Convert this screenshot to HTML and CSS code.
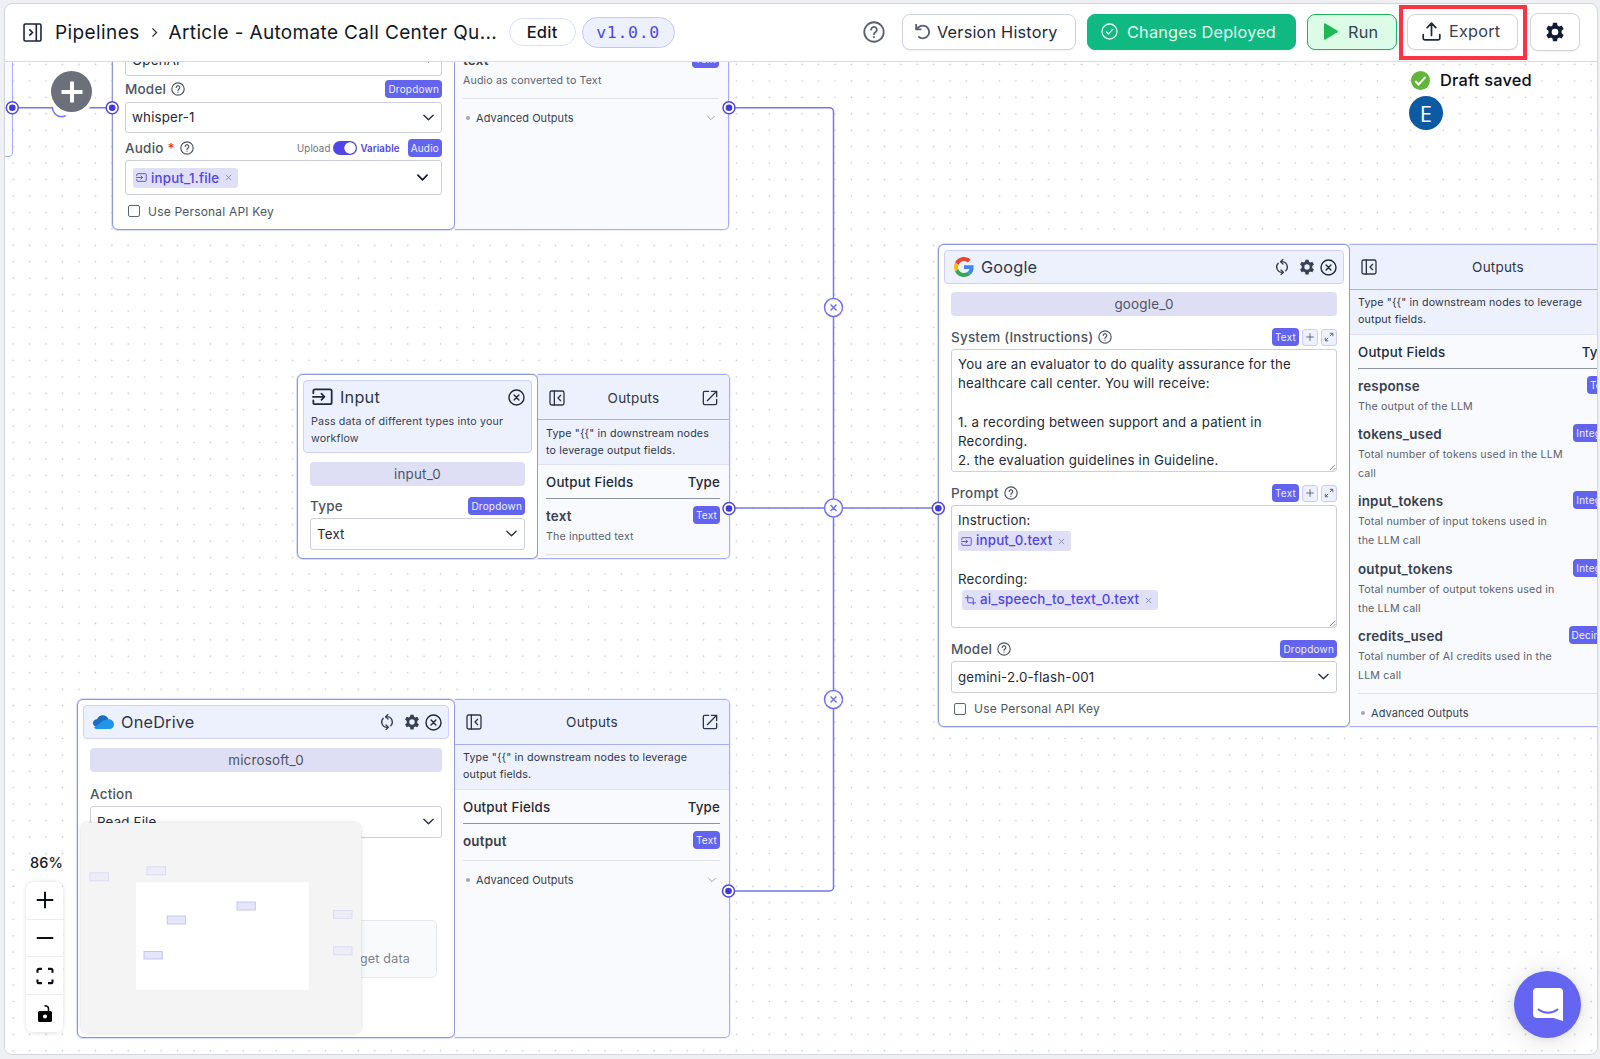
FILE: index.html
```html
<!DOCTYPE html>
<html lang="en">
<head>
    <meta charset="UTF-8">
    <meta name="viewport" content="width=device-width, initial-scale=1.0">
    <title>Pipelines - Automate Call Center</title>
    <link rel="stylesheet" href="styles.css">
</head>
<body>
    <!-- Shared icons -->
    <svg class="sprite" width="0" height="0">
        <symbol id="i-help" viewBox="0 0 24 24"><circle cx="12" cy="12" r="10.6"/><path d="M8.9 9.4a3.1 3.1 0 1 1 4.6 2.8c-1 .6-1.5 1.1-1.5 2.3"/><path d="M12 17.3v.3"/></symbol>
        <symbol id="i-close" viewBox="0 0 24 24"><circle cx="12" cy="12" r="10.6"/><path d="M8.6 8.6l6.8 6.8M15.4 8.6l-6.8 6.8"/></symbol>
        <symbol id="i-chevron" viewBox="0 0 24 24"><path d="M2 7l10 10L22 7"/></symbol>
        <symbol id="i-gear" viewBox="0 0 24 24"><path fill-rule="evenodd" d="M9.6 1h4.8l.6 3.2 1.9 1.1 3.1-1.1 2.4 4.1-2.5 2.1v3.2l2.5 2.1-2.4 4.1-3.1-1.1-1.9 1.1-.6 3.3H9.6l-.6-3.3-1.9-1.1L4 19.800 1.600 15.700l2.500-2.100v-3.200L1.600 8.300 4 4.200l3.100 1.100L9 4.200zM12 8a4 4 0 1 0 0 8 4 4 0 0 0 0-8z"/></symbol>
        <symbol id="i-sync" viewBox="0 0 24 24"><path d="M10.500 4H12a8 8 0 0 1 5.700 13.600M13.500 20H12A8 8 0 0 1 6.300 6.400"/><path d="M13.500.5L10 4l3.500 3.500M10.500 16.500L14 20l-3.500 3.500"/></symbol>
        <symbol id="i-input" viewBox="0 0 24 20"><path d="M1.500 6V3.500a2 2 0 0 1 2-2h17a2 2 0 0 1 2 2v13a2 2 0 0 1-2 2h-17a2 2 0 0 1-2-2V14M1 10h13M10.800 6.500l3.500 3.500-3.500 3.500"/></symbol>
        <symbol id="i-panel" viewBox="0 0 24 24"><rect x="1.500" y="1.500" width="21" height="21" rx="2.500"/><path d="M8 1.500v21M17.500 8l-4 4 4 4"/></symbol>
        <symbol id="i-open" viewBox="0 0 24 24"><path d="M10 2H4a2 2 0 0 0-2 2v16a2 2 0 0 0 2 2h16a2 2 0 0 0 2-2v-6M14 2h8v8M22 2L8 16"/></symbol>
        <symbol id="i-expand" viewBox="0 0 24 24"><path d="M14 3h7v7M21 3l-7 7M10 21H3v-7M3 21l7-7"/></symbol>
        <symbol id="i-plus" viewBox="0 0 24 24"><path d="M12 3v18M3 12h18"/></symbol>
        <symbol id="i-x" viewBox="0 0 24 24"><path d="M4 4l16 16M20 4L4 20"/></symbol>
        <symbol id="i-speech" viewBox="0 0 24 24"><path d="M1 6h14a3 3 0 0 1 3 3v12M6 1v13a3 3 0 0 0 3 3h14"/></symbol>
        <symbol id="i-grip" viewBox="0 0 8 8"><path d="M1 7l6-6M4.500 7.500l3-3"/></symbol>
    </svg>

    <div class="app">
        <header class="topbar">
            <svg class="sidebar-icon" viewBox="0 0 24 24"><rect x="1.300" y="1.300" width="21.400" height="21.400" rx="1.500"/><path d="M16.800 1.300v21.400M8 8l4 4-4 4"/></svg>
            <span class="crumb">Pipelines</span>
            <svg class="crumb-sep" viewBox="0 0 10 16"><path d="M2 2l6 6-6 6"/></svg>
            <span class="crumb title">Article - Automate Call Center Qu...</span>
            <button class="pill">Edit</button>
            <span class="version">v1.0.0</span>

            <div class="actions">
                <svg class="icon help-icon"><use href="#i-help"/></svg>
                <button class="btn history">
                    <svg class="icon" viewBox="0 0 24 24"><path d="M3 1.500V9h7.500M4 8.500c2-3 5-4.700 8.500-4.700a8.900 8.900 0 1 1-6.500 15"/></svg>
                    <span>Version History</span>
                </button>
                <button class="btn deployed">
                    <svg class="icon" viewBox="0 0 24 24"><circle cx="12" cy="12" r="10.600"/><path d="M7.500 12.500l3 3 6-6.500"/></svg>
                    <span>Changes Deployed</span>
                </button>
                <button class="btn run">
                    <svg viewBox="0 0 14 17"><path d="M0 1.200C0 .3.800 0 1.500.400l11.700 7.200c.8.500.8 1.300 0 1.800L1.500 16.600C.8 17 0 16.700 0 15.800z"/></svg>
                    <span>Run</span>
                </button>
                <div class="export-highlight">
                    <button class="btn export">
                        <svg class="icon" viewBox="0 0 24 24"><path d="M1.500 16v4.500a2 2 0 0 0 2 2h17a2 2 0 0 0 2-2V16M12 17V1.800M6.500 7L12 1.500 17.500 7"/></svg>
                        <span>Export</span>
                    </button>
                </div>
                <button class="btn settings"><svg class="solid"><use href="#i-gear"/></svg></button>
            </div>
        </header>

        <main class="canvas">
            <div class="viewport">
                <svg class="edges" width="1600" height="1059">
                    <path d="M12 107.700H112"/>
                    <path d="M729 107.700H829.500a4 4 0 0 1 4 4V508"/>
                    <path d="M729 508H938"/>
                    <path d="M729 891H829.500a4 4 0 0 0 4-4V508"/>
                </svg>

                <div class="node-stub"></div>

                <section class="node node-speech">
                    <div class="node-body">
                        <div class="select"><span>OpenAI</span><svg class="icon"><use href="#i-chevron"/></svg></div>
                        <div class="label-row">
                            <label>Model</label><svg class="icon q"><use href="#i-help"/></svg>
                            <span class="badge">Dropdown</span>
                        </div>
                        <div class="select"><span>whisper-1</span><svg class="icon"><use href="#i-chevron"/></svg></div>
                        <div class="label-row audio-row">
                            <label>Audio <em>*</em></label><svg class="icon q"><use href="#i-help"/></svg>
                            <div class="switch"><span>Upload</span><i></i><b>Variable</b></div>
                            <span class="badge">Audio</span>
                        </div>
                        <div class="select select-chip">
                            <span class="chip"><svg class="icon"><use href="#i-input"/></svg>input_1.file<svg class="icon x"><use href="#i-x"/></svg></span>
                            <svg class="icon"><use href="#i-chevron"/></svg>
                        </div>
                        <div class="check"><i></i><span>Use Personal API Key</span></div>
                    </div>
                    <div class="outputs">
                        <div class="out-head"></div>
                        <p class="out-tip"></p>
                        <div class="out-list">
                            <div class="out-cols"></div>
                            <div class="out-field"><div><h4>text</h4><p>Audio as converted to Text</p></div><span class="badge">Text</span></div>
                            <div class="advanced"><i></i><span>Advanced Outputs</span><svg class="icon"><use href="#i-chevron"/></svg></div>
                        </div>
                    </div>
                </section>

                <section class="node node-input">
                    <div class="node-body">
                        <div class="node-head">
                            <div class="node-title">
                                <svg class="icon title-input"><use href="#i-input"/></svg>
                                <h3>Input</h3>
                                <svg class="icon close"><use href="#i-close"/></svg>
                            </div>
                            <p>Pass data of different types into your workflow</p>
                        </div>
                        <div class="node-id">input_0</div>
                        <div class="label-row"><label>Type</label><span class="badge">Dropdown</span></div>
                        <div class="select"><span>Text</span><svg class="icon"><use href="#i-chevron"/></svg></div>
                    </div>
                    <div class="outputs">
                        <div class="out-head"><svg class="icon"><use href="#i-panel"/></svg><span>Outputs</span><svg class="icon"><use href="#i-open"/></svg></div>
                        <p class="out-tip">Type "{{" in downstream nodes to leverage output fields.</p>
                        <div class="out-list">
                            <div class="out-cols"><span>Output Fields</span><span>Type</span></div>
                            <div class="out-field"><div><h4>text</h4><p>The inputted text</p></div><span class="badge">Text</span></div>
                            <div class="advanced"></div>
                        </div>
                    </div>
                </section>

                <section class="node node-google">
                    <div class="node-body">
                        <div class="node-head">
                            <div class="node-title">
                                <svg class="logo-google" viewBox="0 0 48 48">
                                    <path fill="#EA4335" d="M24 9.500c3.540 0 6.710 1.220 9.210 3.600l6.850-6.850C35.900 2.380 30.470 0 24 0 14.620 0 6.510 5.380 2.560 13.220l7.980 6.190C12.430 13.720 17.740 9.500 24 9.500z"/>
                                    <path fill="#4285F4" d="M46.980 24.550c0-1.570-.15-3.090-.38-4.550H24v9.020h12.940c-.58 2.960-2.260 5.480-4.780 7.180l7.730 6c4.510-4.180 7.090-10.360 7.090-17.650z"/>
                                    <path fill="#FBBC05" d="M10.530 28.590c-.48-1.450-.76-2.990-.76-4.590s.27-3.140.76-4.590l-7.980-6.190C.92 16.460 0 20.120 0 24c0 3.880.92 7.540 2.560 10.780l7.970-6.190z"/>
                                    <path fill="#34A853" d="M24 48c6.480 0 11.930-2.130 15.890-5.810l-7.730-6c-2.150 1.450-4.920 2.300-8.160 2.300-6.260 0-11.570-4.220-13.470-9.910l-7.980 6.190C6.510 42.620 14.620 48 24 48z"/>
                                </svg>
                                <h3>Google</h3>
                                <svg class="icon sync"><use href="#i-sync"/></svg>
                                <svg class="solid gear"><use href="#i-gear"/></svg>
                                <svg class="icon close"><use href="#i-close"/></svg>
                            </div>
                        </div>
                        <div class="node-id">google_0</div>
                        <div class="label-row">
                            <label>System (Instructions)</label><svg class="icon q"><use href="#i-help"/></svg>
                            <span class="badge">Text</span>
                            <span class="mini"><svg class="icon"><use href="#i-plus"/></svg></span>
                            <span class="mini"><svg class="icon"><use href="#i-expand"/></svg></span>
                        </div>
                        <div class="textbox">You are an evaluator to do quality assurance for the<br>healthcare call center. You will receive:<br><br>1. a recording between support and a patient in<br>Recording.<br>2. the evaluation guidelines in Guideline.<svg class="grip"><use href="#i-grip"/></svg></div>
                        <div class="label-row">
                            <label>Prompt</label><svg class="icon q"><use href="#i-help"/></svg>
                            <span class="badge">Text</span>
                            <span class="mini"><svg class="icon"><use href="#i-plus"/></svg></span>
                            <span class="mini"><svg class="icon"><use href="#i-expand"/></svg></span>
                        </div>
                        <div class="textbox prompt">
                            <div class="line">Instruction:</div>
                            <span class="chip"><svg class="icon"><use href="#i-input"/></svg>input_0.text<svg class="icon x"><use href="#i-x"/></svg></span>
                            <div class="line gap">Recording:</div>
                            <span class="chip indent"><svg class="icon speech"><use href="#i-speech"/></svg>ai_speech_to_text_0.text<svg class="icon x"><use href="#i-x"/></svg></span>
                            <svg class="grip"><use href="#i-grip"/></svg>
                        </div>
                        <div class="label-row">
                            <label>Model</label><svg class="icon q"><use href="#i-help"/></svg>
                            <span class="badge">Dropdown</span>
                        </div>
                        <div class="select"><span>gemini-2.0-flash-001</span><svg class="icon"><use href="#i-chevron"/></svg></div>
                        <div class="check"><i></i><span>Use Personal API Key</span></div>
                    </div>
                    <div class="outputs">
                        <div class="out-head"><svg class="icon"><use href="#i-panel"/></svg><span>Outputs</span></div>
                        <p class="out-tip">Type "{{" in downstream nodes to leverage output fields.</p>
                        <div class="out-list">
                            <div class="out-cols"><span>Output Fields</span><span>Type</span></div>
                            <div class="out-field"><div><h4>response</h4><p>The output of the LLM</p></div><span class="badge">Text</span></div>
                            <div class="out-field"><div><h4>tokens_used</h4><p>Total number of tokens used in the LLM<br>call</p></div><span class="badge">Integer</span></div>
                            <div class="out-field"><div><h4>input_tokens</h4><p>Total number of input tokens used in<br>the LLM call</p></div><span class="badge">Integer</span></div>
                            <div class="out-field"><div><h4>output_tokens</h4><p>Total number of output tokens used in<br>the LLM call</p></div><span class="badge">Integer</span></div>
                            <div class="out-field"><div><h4>credits_used</h4><p>Total number of AI credits used in the<br>LLM call</p></div><span class="badge">Decimal</span></div>
                            <div class="advanced"><i></i><span>Advanced Outputs</span></div>
                        </div>
                    </div>
                </section>

                <section class="node node-onedrive">
                    <div class="node-body">
                        <div class="node-head">
                            <div class="node-title">
                                <svg class="logo-onedrive" viewBox="0 0 44 28">
                                    <path fill="#1a6fc4" d="M8 24C2 22 0 15 4 11c2-2 4-2.500 6-2.500C13 1 22-2 29 3c2 1.500 3.500 4 4 6 6 0 9 4 9 9z"/>
                                    <path fill="#2196e8" d="M4 25l20-14c3-2 6-2.500 9-2 7 0 11 4 11 10 0 5-4 9-9 9H11c-3 0-5.500-1-7-3z"/>
                                </svg>
                                <h3>OneDrive</h3>
                                <svg class="icon sync"><use href="#i-sync"/></svg>
                                <svg class="solid gear"><use href="#i-gear"/></svg>
                                <svg class="icon close"><use href="#i-close"/></svg>
                            </div>
                        </div>
                        <div class="node-id">microsoft_0</div>
                        <div class="label-row"><label>Action</label></div>
                        <div class="select"><span>Read File</span><svg class="icon"><use href="#i-chevron"/></svg></div>
                        <div class="hint-box">get data</div>
                    </div>
                    <div class="outputs">
                        <div class="out-head"><svg class="icon"><use href="#i-panel"/></svg><span>Outputs</span><svg class="icon"><use href="#i-open"/></svg></div>
                        <p class="out-tip">Type "{{" in downstream nodes to leverage output fields.</p>
                        <div class="out-list">
                            <div class="out-cols"><span>Output Fields</span><span>Type</span></div>
                            <div class="out-field"><div><h4>output</h4></div><span class="badge">Text</span></div>
                            <div class="advanced"><i></i><span>Advanced Outputs</span><svg class="icon"><use href="#i-chevron"/></svg></div>
                        </div>
                    </div>
                </section>

                <!-- Handles and edge buttons sit over the nodes -->
                <svg class="edges over" width="1600" height="1059">
                    <g class="cut">
                        <g transform="translate(61.500 107.700)"><circle r="9"/></g>
                        <g transform="translate(833.500 307.500)"><circle r="9"/><path d="M-3-3l6 6M3-3l-6 6"/></g>
                        <g transform="translate(833.500 508)"><circle r="9"/><path d="M-3-3l6 6M3-3l-6 6"/></g>
                        <g transform="translate(833.500 699.500)"><circle r="9"/><path d="M-3-3l6 6M3-3l-6 6"/></g>
                    </g>
                    <g class="handle">
                        <g transform="translate(12.300 107.700)"><circle r="6"/><circle class="dot" r="3.300"/></g>
                        <g transform="translate(112.200 107.700)"><circle r="6"/><circle class="dot" r="3.300"/></g>
                        <g transform="translate(729 107.700)"><circle r="6"/><circle class="dot" r="3.300"/></g>
                        <g transform="translate(729 508.500)"><circle r="6"/><circle class="dot" r="3.300"/></g>
                        <g transform="translate(938.300 508.300)"><circle r="6"/><circle class="dot" r="3.300"/></g>
                        <g transform="translate(728.500 891)"><circle r="6"/><circle class="dot" r="3.300"/></g>
                    </g>
                </svg>
            </div>

            <button class="add-node"><svg class="icon"><use href="#i-plus"/></svg></button>

            <div class="status">
                <div class="saved">
                    <svg viewBox="0 0 20 20"><circle cx="10" cy="10" r="10"/><path d="M4.500 10.500l3.500 3.700 7.300-8"/></svg>
                    <span>Draft saved</span>
                </div>
                <div class="avatar">E</div>
            </div>

            <svg class="minimap" viewBox="0 0 280 210">
                <rect class="mask" width="280" height="210" rx="7"/>
                <rect class="view" x="55" y="59.300" width="172.500" height="107.500"/>
                <g class="outside">
                    <rect x="9" y="49.800" width="18.500" height="8"/>
                    <rect x="66" y="43.800" width="18.500" height="8"/>
                    <rect x="252.500" y="87.500" width="18.500" height="8"/>
                    <rect x="252.500" y="123.800" width="18.500" height="8"/>
                </g>
                <rect x="156" y="79" width="18.300" height="8"/>
                <rect x="86.300" y="93" width="18.300" height="8"/>
                <rect x="63" y="128.500" width="18.300" height="7.500"/>
            </svg>

            <div class="zoom">
                <span class="zoom-value">86%</span>
                <div class="zoom-controls">
                    <button><svg class="icon"><use href="#i-plus"/></svg></button>
                    <button><svg class="icon" viewBox="0 0 24 24"><path d="M3 12h18"/></svg></button>
                    <button><svg class="icon fit" viewBox="0 0 24 24"><path d="M2 7.500V4.500a2 2 0 0 1 2-2h4M16 2.500h4a2 2 0 0 1 2 2v3M22 16.500v3a2 2 0 0 1-2 2h-4M8 21.500H4a2 2 0 0 1-2-2v-3"/></svg></button>
                    <button><svg class="lock" viewBox="0 0 14 17"><path fill-rule="evenodd" d="M1.500 6h11A1.500 1.500 0 0 1 14 7.500v8a1.500 1.500 0 0 1-1.500 1.500h-11A1.500 1.500 0 0 1 0 15.500v-8A1.500 1.500 0 0 1 1.500 6zM7 9.500a2 2 0 1 0 0 4 2 2 0 0 0 0-4z"/><path class="shackle" d="M10.500 6V3.500c0-1.700-1.300-2.700-4-2.700"/></svg></button>
                </div>
            </div>

            <button class="chat">
                <svg viewBox="0 0 30 33"><path class="bubble" d="M4 0h22a4 4 0 0 1 4 4v29l-9.500-3H4a4 4 0 0 1-4-4V4a4 4 0 0 1 4-4z"/><path class="smile" d="M5.500 21.500c5.500 4.300 13.500 4.300 19 0"/></svg>
            </button>
        </main>
    </div>
</body>
</html>
```
FILE: styles.css
```css
* {
    box-sizing: border-box;
}
body {
    margin: 0;
    padding: 3px 2px 4px 4px;
    height: 1059px;
    overflow: hidden;
    background: #eff0f3;
    font-family: Inter, "Liberation Sans", sans-serif;
    color: #111827;
    letter-spacing: 0.2px;
}
h3, h4, p {
    margin: 0;
    font-weight: 400;
}
button {
    font: inherit;
    letter-spacing: inherit;
    color: inherit;
    padding: 0;
    background: #fff;
}
.sprite {
    position: absolute;
}
.icon {
    fill: none;
    stroke: currentColor;
    stroke-width: 2;
    stroke-linecap: round;
    stroke-linejoin: round;
    flex: none;
}
.solid {
    fill: currentColor;
    flex: none;
}
.app {
    display: flex;
    flex-direction: column;
    height: 1052px;
    border: 1px solid #d3d6dd;
    border-radius: 8px;
    overflow: hidden;
    background: #fff;
}

/* Top bar */
.topbar {
    display: flex;
    align-items: center;
    height: 58px;
    flex: none;
    padding: 0 17px 1px 18px;
    border-bottom: 1px solid #d8dae0;
}
.sidebar-icon {
    width: 19px;
    height: 19px;
    margin-right: 13px;
    fill: none;
    stroke: #1b2338;
    stroke-width: 2;
}
.crumb {
    font-size: 19px;
    white-space: nowrap;
    letter-spacing: 0.4px;
}
.crumb-sep {
    width: 7px;
    height: 11px;
    margin: 0 11px 0 11px;
    fill: none;
    stroke: #1f2937;
    stroke-width: 1.8;
}
.title {
    width: 331px;
    letter-spacing: 0.35px;
}
.pill {
    width: 67px;
    height: 28px;
    margin-left: 9px;
    border: 1px solid #dcdffc;
    border-radius: 14px;
    font-size: 16.5px;
    font-weight: 500;
}
.version {
    display: flex;
    align-items: center;
    justify-content: center;
    width: 93px;
    height: 31px;
    margin-left: 6px;
    border: 1px solid #c3c8f8;
    border-radius: 16px;
    background: #edf1fe;
    color: #4f46e5;
    font-family: "DejaVu Sans Mono", monospace;
    font-size: 16.5px;
    letter-spacing: 0.7px;
}
.actions {
    display: flex;
    align-items: center;
    margin-left: auto;
}
.help-icon {
    width: 22px;
    height: 22px;
    margin-right: 17px;
    color: #5b6270;
}
.btn {
    display: flex;
    align-items: center;
    height: 36px;
    padding-bottom: 1px;
    border: 1px solid #d0d3da;
    border-radius: 8px;
    font-size: 16.3px;
    white-space: nowrap;
    box-shadow: 0 1px 2px rgba(0, 0, 0, 0.06);
}
.history {
    width: 174px;
    padding-left: 11px;
    gap: 6px;
    color: #1f2937;
}
.history .icon {
    width: 17px;
    height: 17px;
    color: #5b6270;
    stroke-width: 2.6;
    stroke-linecap: butt;
}
.deployed {
    width: 209px;
    margin-left: 11px;
    padding-left: 13px;
    gap: 9px;
    border-color: #10b981;
    background: #10b981;
    color: #e2fbee;
}
.deployed .icon {
    width: 17px;
    height: 17px;
    stroke-width: 1.8;
}
.run {
    width: 90px;
    margin-left: 11px;
    padding-left: 16px;
    gap: 10px;
    border-color: #1fb45c;
    background: #dcfce7;
    color: #374151;
}
.run svg {
    width: 14px;
    height: 17px;
    fill: #1db954;
}
.export-highlight {
    width: 128px;
    height: 55px;
    margin: 0 3px 0 2px;
    border: 4px solid #fb3343;
    padding: 5px 4px;
}
.export {
    width: 111px;
    padding-left: 14px;
    gap: 8px;
    color: #374151;
}
.export .icon {
    width: 19px;
    height: 19px;
    color: #1f2937;
    stroke-width: 2.2;
}
.settings {
    width: 50px;
    height: 38px;
    padding-bottom: 0;
    justify-content: center;
    color: #111c33;
}
.settings svg {
    width: 20px;
    height: 20px;
}

/* Canvas */
.canvas {
    position: relative;
    flex: 1;
    overflow: hidden;
    background-color: #fff;
    background-image: radial-gradient(circle at 8.2px 8.2px, #c9ccd6 0.7px, transparent 1.1px);
    background-size: 16.45px 16.45px;
    background-position: 0 -5.7px;
}
.viewport {
    position: absolute;
    left: -5px;
    top: -62px;
    width: 1600px;
    height: 1059px;
}
.edges {
    position: absolute;
    left: 0;
    top: 0;
    fill: none;
    stroke: #7376f2;
    stroke-width: 1.5;
}
.over {
    pointer-events: none;
}
.cut circle {
    fill: #fff;
}
.handle {
    fill: #fff;
    stroke: #4f46e5;
}
.handle .dot {
    fill: #4338e0;
    stroke: none;
}
.node {
    position: absolute;
    display: flex;
}
.node-stub {
    position: absolute;
    left: -40px;
    top: 20px;
    width: 53px;
    height: 137px;
    border: 1px solid #a9adf8;
    border-radius: 4px;
    background: #f9fafd;
}
.node-speech {
    left: 112px;
    top: -82px;
    height: 312px;
}
.node-input {
    left: 297px;
    top: 374px;
    height: 185px;
}
.node-google {
    left: 938px;
    top: 244px;
    height: 483px;
}
.node-onedrive {
    left: 77px;
    top: 699px;
    height: 339px;
}
.node-body {
    display: flex;
    flex-direction: column;
    padding: 5px 12px 0;
    border: 1px solid #8d97da;
    border-radius: 6px;
    background: #fff;
    box-shadow: 0 0 0 1px rgba(150, 160, 250, 0.35);
}
.node-speech .node-body {
    width: 343px;
    justify-content: flex-end;
    padding-bottom: 11px;
}
.node-input .node-body {
    width: 241px;
}
.node-google .node-body {
    width: 412px;
}
.node-onedrive .node-body {
    width: 378px;
}
.node-head {
    margin: 0 -7px;
    padding: 0 7px;
    min-height: 34px;
    border: 1px solid #cdd1fa;
    border-radius: 4px;
    background: #edf1fe;
}
.node-input .node-head {
    height: 73px;
}
.node-title {
    display: flex;
    align-items: center;
    height: 32px;
    color: #374151;
}
.node-title h3 {
    flex: 1;
    margin-left: 7px;
    font-size: 16.3px;
    color: #2d3648;
}
.node-head p {
    margin-top: 1px;
    font-size: 10.7px;
    line-height: 16.5px;
    letter-spacing: 0.15px;
    color: #374151;
}
.title-input {
    width: 21px;
    height: 17.5px;
    margin-left: 1px;
    color: #1f2937;
}
.close {
    width: 17px;
    height: 17px;
    margin-right: -1px;
    color: #1f2937;
}
.sync {
    width: 16px;
    height: 16px;
    margin-right: 9px;
}
.gear {
    width: 16px;
    height: 16px;
    margin-right: 5px;
}
.logo-google {
    width: 20px;
    height: 20px;
    margin-left: 2px;
}
.logo-onedrive {
    width: 22px;
    height: 14px;
    margin-left: 1px;
}
.node-id {
    height: 24px;
    margin-top: 8px;
    flex: none;
    border-radius: 4px;
    background: #dedef5;
    font-size: 13.4px;
    line-height: 24px;
    text-align: center;
    color: #4b5563;
}
.node-input .node-id,
.node-onedrive .node-id {
    margin-top: 9px;
}
.label-row {
    display: flex;
    align-items: center;
    height: 18px;
    margin: 12px 0 3px;
    flex: none;
    font-size: 13.5px;
    color: #4b5563;
}
.node-input .label-row {
    margin-top: 11px;
}
.node-onedrive .label-row {
    margin-top: 13px;
}
.label-row label {
    font-weight: 500;
    white-space: nowrap;
    margin-right: auto;
}
.label-row label:has(+ .q) {
    margin-right: 5px;
}
.label-row em {
    color: #ef2b2b;
    font-style: normal;
}
.q {
    width: 14px;
    height: 14px;
    margin-right: auto;
}
.badge {
    flex: none;
    height: 18px;
    padding: 0 3px;
    border-radius: 4px;
    background: #6264f0;
    color: #eef0ff;
    font-size: 10px;
    line-height: 18px;
}
.mini {
    display: flex;
    align-items: center;
    justify-content: center;
    width: 16px;
    height: 17px;
    margin-left: 3px;
    border: 1px solid #c9cdf9;
    border-radius: 3px;
    background: #edf1fe;
    color: #4b5563;
}
.mini .icon {
    width: 10px;
    height: 10px;
    stroke-linecap: butt;
    stroke-linejoin: miter;
}
.select {
    display: flex;
    align-items: center;
    justify-content: space-between;
    flex: none;
    height: 31.5px;
    padding: 0 7px 0 6px;
    border: 1px solid #cdd0d7;
    border-radius: 3px;
    background: #fff;
    font-size: 13.3px;
    color: #1f2937;
}
.select > .icon {
    width: 11px;
    height: 11px;
    stroke-width: 2.8;
}
.node-speech .label-row {
    margin-top: 4px;
    margin-bottom: 4px;
}
.node-speech .audio-row {
    margin-top: 6px;
    margin-bottom: 3px;
}
.node-speech .select-chip {
    height: 35px;
    padding: 0 13px 0 7px;
}
.select-chip > .icon {
    color: #111827;
    stroke-width: 3.6;
}
.switch {
    display: flex;
    align-items: center;
    gap: 3px;
    margin-right: 8px;
    font-size: 9.7px;
    letter-spacing: 0.1px;
    color: #6b7280;
}
.switch i {
    width: 24px;
    height: 14px;
    border-radius: 7px;
    background: radial-gradient(circle at 17px 7px, #fff 5.3px, #4f46e5 6px);
}
.switch b {
    font-weight: 600;
    color: #4f46e5;
}
.chip {
    display: inline-flex;
    align-items: center;
    height: 20px;
    padding: 0 6px 0 3px;
    border-radius: 3px;
    background: #dfdff7;
    color: #4f46e5;
    font-size: 13.3px;
    font-weight: 500;
    white-space: nowrap;
}
.chip .icon {
    width: 11px;
    height: 9px;
    margin-right: 4px;
}
.chip .speech {
    width: 11px;
    height: 11px;
}
.chip .x {
    width: 7px;
    height: 7px;
    margin: 0 0 0 6px;
    color: #858aa0;
    stroke-width: 3;
}
.textbox {
    position: relative;
    height: 123px;
    flex: none;
    padding: 5px 5px 0 6px;
    border: 1px solid #cdd0d7;
    border-radius: 3px;
    font-size: 13.25px;
    line-height: 19.3px;
    color: #1f2937;
    white-space: nowrap;
}
.prompt .line {
    height: 20px;
}
.prompt .gap {
    margin-top: 19px;
}
.prompt .chip {
    display: flex;
    width: max-content;
}
.prompt .indent {
    margin-left: 4px;
}
.grip {
    position: absolute;
    right: 0;
    bottom: 0;
    width: 7px;
    height: 7px;
    stroke: #6b7280;
    stroke-width: 0.9;
}
.check {
    display: flex;
    align-items: center;
    height: 14px;
    margin-top: 9px;
    padding-left: 3px;
    flex: none;
    gap: 8px;
    font-size: 12px;
    color: #4b5563;
}
.check i {
    width: 12px;
    height: 12px;
    border: 1px solid #5f6673;
    border-radius: 2px;
}
.hint-box {
    height: 58px;
    flex: none;
    margin: 82px 5px 0 6px;
    padding: 30px 26px 0 0;
    border: 1px solid #e7e9ef;
    border-radius: 5px;
    background: #f9fafc;
    font-size: 12.5px;
    text-align: right;
    color: #7b8190;
}

/* Outputs panel */
.outputs {
    width: 274px;
    border: 1px solid #a9adf8;
    border-left: 0;
    border-radius: 0 5px 5px 0;
    background: #f9fafd;
    box-shadow: 0 0 0 1px rgba(165, 170, 250, 0.2);
    overflow: hidden;
}
.node-input .outputs {
    width: 192px;
}
.node-onedrive .outputs {
    width: 275px;
}
.out-head {
    display: flex;
    align-items: center;
    height: 45px;
    padding: 0 11px;
    border-bottom: 1px solid #aaaef8;
    background: #edf1fe;
    color: #2d3648;
    font-size: 13.5px;
}
.out-head span {
    flex: 1;
    text-align: center;
}
.node-google .out-head span {
    margin-left: 7px;
}
.out-head .icon {
    width: 16px;
    height: 16px;
}
.out-tip {
    height: 45px;
    padding: 5px 8px 0;
    border-bottom: 1px solid #dfe2fa;
    background: #edf1fe;
    font-size: 10.7px;
    line-height: 16.5px;
    letter-spacing: 0.15px;
    color: #2d3648;
}
.node-input .out-head {
    padding-top: 1px;
}
.node-input .out-tip {
    padding-top: 6px;
}
.out-list {
    padding: 0 9px 0 8px;
}
.out-cols {
    display: flex;
    justify-content: space-between;
    align-items: center;
    height: 33.5px;
    padding-top: 1px;
    border-bottom: 1px solid #8d94a0;
    margin-bottom: 7px;
    font-size: 13.3px;
    font-weight: 500;
    color: #1f2937;
}
.out-field {
    display: flex;
    justify-content: space-between;
    margin-bottom: 8px;
}
.out-field h4 {
    font-size: 13.4px;
    font-weight: 600;
    line-height: 21px;
    color: #374151;
}
.out-field p {
    font-size: 10.65px;
    line-height: 19.2px;
    letter-spacing: 0.15px;
    white-space: nowrap;
    color: #5b6270;
}
.advanced {
    display: flex;
    align-items: center;
    height: 39px;
    padding: 0 4px 0 3px;
    border-top: 1px solid #dfe1e7;
    font-size: 11px;
    letter-spacing: 0.05px;
    color: #374151;
}
.advanced i {
    width: 4px;
    height: 4px;
    margin-right: 6px;
    border-radius: 50%;
    background: #a3a7b3;
}
.advanced .icon {
    width: 8px;
    height: 8px;
    margin-left: auto;
    color: #9ca3af;
    stroke-width: 3;
}

/* Things floating over the canvas */
.add-node {
    position: absolute;
    left: 46px;
    top: 9px;
    width: 41px;
    height: 41px;
    border: 0;
    border-radius: 50%;
    background: #6b707b;
    color: #fff;
    box-shadow: 0 0 0 4px #fff;
}
.add-node svg {
    display: block;
    width: 28px;
    height: 28px;
    margin: auto;
    stroke-width: 3.4;
    stroke-linecap: butt;
}
.status {
    position: absolute;
    left: 1404px;
    top: 8px;
}
.saved {
    display: flex;
    align-items: center;
    height: 20px;
    padding-left: 2px;
    gap: 10px;
    font-size: 16.4px;
    font-weight: 500;
    white-space: nowrap;
    color: #0c0f16;
}
.saved svg {
    width: 19px;
    height: 19px;
    fill: #62b53a;
}
.saved path {
    fill: none;
    stroke: #fff;
    stroke-width: 2;
}
.avatar {
    width: 34px;
    height: 34px;
    margin-top: 6px;
    border-radius: 50%;
    background: #0b5aa3;
    color: #fff;
    font-size: 22px;
    line-height: 34px;
    text-align: center;
    font-family: "Open Sans", sans-serif;
}
.minimap {
    position: absolute;
    left: 76px;
    top: 761px;
    width: 280px;
    height: 210px;
    border-radius: 7px;
    box-shadow: 0 0 4px rgba(0, 0, 0, 0.16);
    fill: #e5e6fb;
    stroke: #c3c5f8;
}
.minimap .mask {
    fill: #f4f4f4;
    stroke: none;
}
.minimap .view {
    fill: #fff;
    stroke: none;
}
.outside {
    opacity: 0.5;
}
.zoom {
    position: absolute;
    left: 21px;
    top: 791px;
    display: flex;
    flex-direction: column;
    align-items: center;
    gap: 9px;
    width: 37px;
}
.zoom-value {
    margin-left: 4px;
    font-size: 14.5px;
    font-weight: 500;
    line-height: 20px;
    color: #111827;
}
.zoom-controls {
    width: 37px;
    height: 151px;
    border-radius: 8px;
    background: #fff;
    box-shadow: 0 0 4px rgba(0, 0, 0, 0.14);
    overflow: hidden;
}
.zoom-controls button {
    display: flex;
    align-items: center;
    justify-content: center;
    width: 37px;
    height: 37.7px;
    border: 0;
    border-bottom: 1px solid #eceef1;
    color: #0b0f19;
}
.zoom-controls .icon {
    width: 22px;
    height: 22px;
    stroke-width: 2.2;
    stroke-linecap: butt;
}
.zoom-controls .fit {
    width: 18px;
    height: 18px;
    stroke-width: 2.8;
}
.lock {
    width: 14px;
    height: 17px;
}
.shackle {
    fill: none;
    stroke: #0b0f19;
    stroke-width: 1.6;
}
.chat {
    position: absolute;
    left: 1509px;
    top: 909px;
    display: flex;
    align-items: center;
    justify-content: center;
    width: 67px;
    height: 67px;
    border: 0;
    border-radius: 50%;
    background: #6466f1;
    box-shadow: 0 1px 6px rgba(0, 0, 0, 0.08), 0 2px 28px rgba(0, 0, 0, 0.13);
}
.chat svg {
    width: 30px;
    height: 33px;
}
.bubble {
    fill: #fff;
}
.smile {
    fill: none;
    stroke: #6466f1;
    stroke-width: 2;
    stroke-linecap: round;
}
```
